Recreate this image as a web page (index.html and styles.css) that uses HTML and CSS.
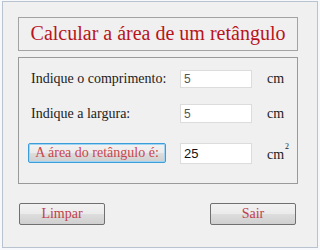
FILE: index.html
```html
<!DOCTYPE html>
<html>
<head>
    <title>Área do retângulo</title>
    <link rel="stylesheet" href="styles.css">
</head>
<body>
<div class="janela">
    <div class="titulo">Calcular a área de um retângulo</div>

    <div class="grupo">
        <label class="rotulo" for="comprimento">Indique o comprimento:</label>
        <input class="campo" type="text" id="comprimento" value="5">
        <span class="unidade">cm</span>

        <label class="rotulo" for="largura">Indique a largura:</label>
        <input class="campo" type="text" id="largura" value="5">
        <span class="unidade">cm</span>

        <button class="btn btn-area">A área do retângulo é:</button>
        <input class="campo resultado" type="text" id="area" value="25" readonly>
        <span class="unidade quadrado">cm<sup>2</sup></span>
    </div>

    <div class="acoes">
        <button class="btn">Limpar</button>
        <button class="btn">Sair</button>
    </div>
</div>
</body>
</html>
```

FILE: styles.css
```css
* {
    margin: 0;
    padding: 0;
    box-sizing: border-box;
}
body {
    font-family: "Liberation Serif", "Times New Roman", serif;
    background-color: #f6f8fb;
    padding: 1px 2px;
}
.janela {
    height: 247px;
    border: 1px solid #b9c3cf;
    background-color: #f0f0f0;
    padding: 15px 19px 0 15px;
}
.titulo {
    height: 34px;
    border: 1px solid #a3a3a3;
    color: #b8141c;
    font-size: 20px;
    text-align: center;
    line-height: 31px;
}
.grupo {
    margin-top: 6px;
    height: 127px;
    border: 1px solid #9a9a9a;
    padding: 12px 0 0 12px;
    display: grid;
    grid-template-columns: 134px 72px auto;
    grid-template-rows: 18px 19px 25px;
    row-gap: 16px;
    column-gap: 15px;
    align-items: center;
}
.rotulo {
    font-family: "Liberation Serif", "Times New Roman", serif;
    font-size: 14px;
    color: #222;
    white-space: nowrap;
}
.campo {
    width: 72px;
    height: 100%;
    border: 1px solid #dcdcdc;
    background: #fff;
    font-family: "Liberation Sans", Arial, sans-serif;
    font-size: 12px;
    color: #555;
    padding: 0 3px;
}
.resultado {
    font-size: 13px;
    color: #111;
    height: 21px;
    align-self: end;
}
.unidade {
    font-family: "Liberation Serif", "Times New Roman", serif;
    font-size: 14px;
    color: #222;
}
.quadrado {
    align-self: end;
    padding-bottom: 1px;
}
.quadrado sup {
    font-size: 8px;
    vertical-align: 10px;
    margin-left: 1px;
}
.btn {
    font-family: "Liberation Serif", "Times New Roman", serif;
    font-size: 14px;
    color: #c0404c;
    background: linear-gradient(#f2f2f2 0%, #ebebeb 48%, #dddddd 52%, #cfcfcf 100%);
    border: 1px solid #707070;
    border-radius: 2px;
    width: 86px;
    height: 22px;
}
.btn-area {
    width: 138px;
    height: 20px;
    margin-left: -3px;
    align-self: end;
    margin-bottom: 1px;
    border: 1px solid #3c9ed8;
    box-shadow: inset 0 0 0 1px #9fd5f2;
    color: #c8464e;
}
.acoes {
    margin-top: 19px;
    display: flex;
    justify-content: space-between;
    padding: 0 2px 0 1px;
}
```
